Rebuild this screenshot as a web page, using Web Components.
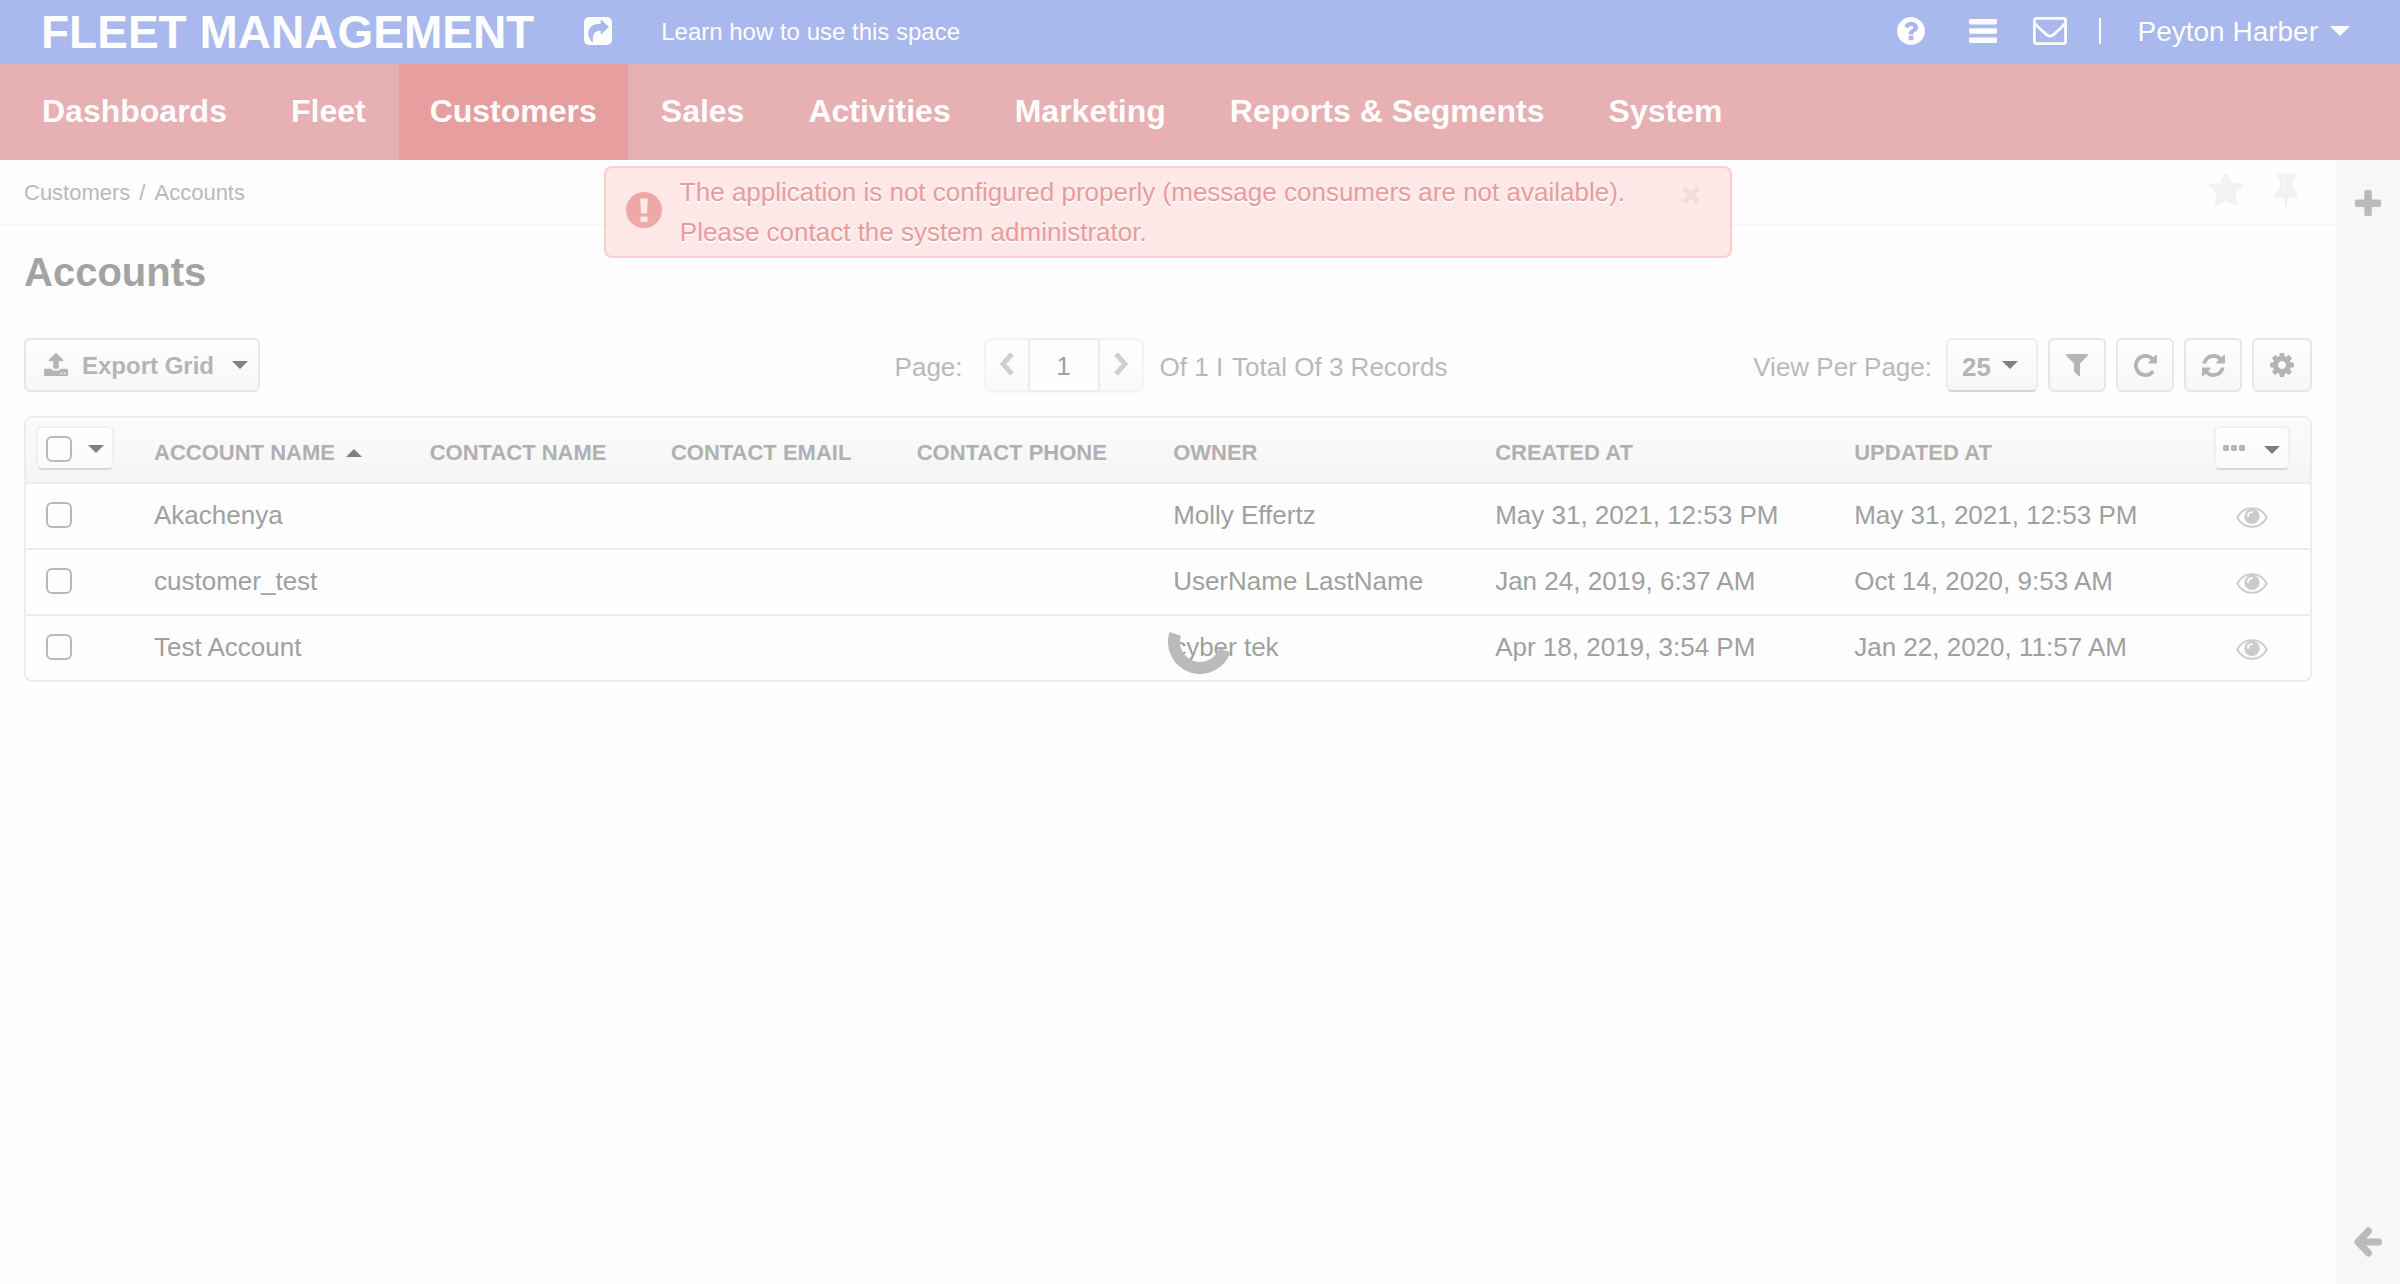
<!DOCTYPE html>
<html lang="en">
<head>
<meta charset="utf-8">
<title>Accounts - Customers - Fleet Management</title>
<style>
  html, body { height: 100%; }
  body {
    margin: 0;
    background: #fefefe;
    color: #a0a0a0;
    font-family: "Liberation Sans", Arial, Helvetica, sans-serif;
    font-size: 26px;
  }
</style>
</head>
<body>
<fm-app></fm-app>

<script>
const ICONS = {
  share: ['0 0 28 28', '<rect width="28" height="28" rx="5"/><path d="M16.700 2.500L25 10L16.700 17.800V13.800C11.500 13.600 8.300 15.800 8.900 25.500C5.500 23 4.300 19.500 4.300 16C4.300 10 9 6.700 16.700 6.700Z" fill="#a9b8ed"/>'],
  question: ['128 128 1536 1536', '<path d="M1024 1376v-192q0-14-9-23t-23-9h-192q-14 0-23 9t-9 23v192q0 14 9 23t23 9h192q14 0 23-9t9-23zm256-672q0-88-55.5-163t-138.5-116-170-41q-243 0-371 213-15 24 8 42l132 100q7 6 19 6 16 0 25-12 53-68 86-92 34-24 86-24 48 0 85.5 26t37.5 59q0 38-20 61t-68 45q-63 28-115.5 86.5t-52.5 125.5v36q0 14 9 23t23 9h192q14 0 23-9t9-23q0-19 21.5-49.5t54.5-49.5q32-18 49-28.5t46-35 44.5-48 28-60.5 12.5-81zm384 192q0 209-103 385.5t-279.5 279.5-385.5 103-385.5-103-279.5-279.5-103-385.5 103-385.5 279.5-279.5 385.5-103 385.5 103 279.5 279.5 103 385.5z"/>'],
  bars: ['0 0 28 24', '<rect width="28" height="5.4" rx="1.4"/><rect y="9.3" width="28" height="5.4" rx="1.4"/><rect y="18.6" width="28" height="5.4" rx="1.4"/>'],
  envelope: ['0 0 34 28', '<rect x="1.4" y="1.4" width="31.2" height="25.2" rx="2" fill="none" stroke="currentColor" stroke-width="2.8"/><path d="M2 6.500C6 11.500 10 14.500 13.500 17.600Q17 20.400 20.500 17.600C24 14.500 28 11.500 32 6.500" fill="none" stroke="currentColor" stroke-width="2.800"/>'],
  star: ['64 128 1664 1600', '<path d="M1728 647q0 22-26 48l-363 354 86 500q1 7 1 20 0 21-10.5 35.5t-30.5 14.5q-19 0-40-12l-449-236-449 236q-22 12-40 12-21 0-31.5-14.500t-10.500-35.500q0-6 2-20l86-500-364-354q-25-27-25-48 0-37 56-46l502-73 225-455q19-41 49-41t49 41l225 455 502 73q56 9 56 46z"/>'],
  pin: ['320 128 1152 1664', '<path d="M800 864v-448q0-14-9-23t-23-9-23 9-9 23v448q0 14 9 23t23 9 23-9 9-23zm672 352q0 26-19 45t-45 19h-429l-51 483q-2 12-10.5 20.500t-20.500 8.500h-1q-27 0-32-27l-76-485h-404q-26 0-45-19t-19-45q0-123 78.500-221.500t177.500-98.500v-512q-52 0-90-38t-38-90 38-90 90-38h640q52 0 90 38t38 90-38 90-90 38v512q99 0 177.500 98.500t78.500 221.500z"/>'],
  plus: ['0 0 26 26', '<rect y="9.500" width="26" height="7.500" rx="1.800"/><rect x="9.300" width="7.500" height="26" rx="1.800"/>'],
  arrowLeft: ['0 0 28 30', '<path d="M14.500 4L4 15L14.500 26M5 15H24.500" fill="none" stroke="currentColor" stroke-width="7" stroke-linecap="round" stroke-linejoin="round"/>'],
  alert: ['0 0 36 36', '<circle cx="18" cy="18" r="18"/><path d="M14.200 6.500h7.600l-.8 15h-6zM14.500 24.500h7v5.500h-7z" fill="#fee8e8"/>'],
  upload: ['64 64 1664 1664', '<path d="M1344 1472q0-26-19-45t-45-19-45 19-19 45 19 45 45 19 45-19 19-45zm256 0q0-26-19-45t-45-19-45 19-19 45 19 45 45 19 45-19 19-45zm128-224v320q0 40-28 68t-68 28h-1472q-40 0-68-28t-28-68v-320q0-40 28-68t68-28h427q21 56 70.500 92t110.500 36h256q61 0 110.500-36t70.500-92h427q40 0 68 28t28 68zm-325-648q-17 40-59 40h-256v448q0 26-19 45t-45 19h-256q-26 0-45-19t-19-45v-448h-256q-42 0-59-40-17-39 14-69l448-448q18-19 45-19t45 19l448 448q31 30 14 69z"/>'],
  filter: ['192 256 1408 1408', '<path d="M1595 295q17 41-14 70l-493 493v742q0 42-39 59-13 5-25 5-27 0-45-19l-256-256q-19-19-19-45v-486l-493-493q-31-29-14-70 17-39 59-39h1280q42 0 59 39z"/>'],
  repeat: ['128 128 1536 1536', '<path d="M1664 256v448q0 26-19 45t-45 19h-448q-42 0-59-40-17-39 14-69l138-138q-148-137-349-137-104 0-198.500 40.500t-163.500 109.500-109.500 163.500-40.500 198.500 40.500 198.500 109.500 163.500 163.500 109.500 198.500 40.500q119 0 225-52t179-147q7-10 23-12 15 0 25 9l137 138q9 8 9.500 20.500t-7.500 22.500q-109 132-264 204.500t-327 72.500q-156 0-298-61t-245-164-164-245-61-298 61-298 164-245 245-164 298-61q147 0 284.500 55.500t244.500 156.500l130-129q29-31 70-14 39 17 39 59z"/>'],
  refresh: ['128 128 1536 1536', '<path d="M1639 1056q0 5-1 7-64 268-268 434.500t-478 166.500q-146 0-282.500-55t-243.500-157l-129 129q-19 19-45 19t-45-19-19-45v-448q0-26 19-45t45-19h448q26 0 45 19t19 45-19 45l-137 137q71 66 161 102t187 36q134 0 250-65t186-179q11-17 53-117 8-23 30-23h192q13 0 22.500 9.500t9.500 22.500zm25-800v448q0 26-19 45t-45 19h-448q-26 0-45-19t-19-45 19-45l138-138q-148-137-349-137-134 0-250 65t-186 179q-11 17-53 117-8 23-30 23h-199q-13 0-22.500-9.500t-9.500-22.500v-7q65-268 270-434.500t480-166.500q146 0 284 55.500t245 156.500l130-129q19-19 45-19t45 19 19 45z"/>'],
  cog: ['128 128 1536 1536', '<path d="M1152 896q0-106-75-181t-181-75-181 75-75 181 75 181 181 75 181-75 75-181zm512-109v222q0 12-8 23t-20 13l-185 28q-19 54-39 91 35 50 107 138 10 12 10 25t-9 23q-27 37-99 108t-94 71q-12 0-26-9l-138-108q-44 23-91 38-16 136-29 186-7 28-36 28h-222q-14 0-24.500-8.500t-11.500-21.500l-28-184q-49-16-90-37l-141 107q-10 9-25 9-14 0-25-11-126-114-165-168-7-10-7-23 0-12 8-23 15-21 51-66.500t54-70.500q-27-50-41-99l-183-27q-13-2-21-12.500t-8-23.500v-222q0-12 8-23t19-13l186-28q14-46 39-92-40-57-107-138-10-12-10-24 0-10 9-23 26-36 98.500-107.500t94.500-71.500q13 0 26 10l138 107q44-23 91-38 16-136 29-186 7-28 36-28h222q14 0 24.500 8.500t11.500 21.500l28 184q49 16 90 37l142-107q9-9 24-9 13 0 25 10 129 119 165 170 7 8 7 22 0 12-8 23-15 21-51 66.500t-54 70.500q26 50 41 98l183 28q13 2 21 12.500t8 23.500z"/>'],
  eye: ['0 0 32 21', '<path d="M1.200 10.500C4.500 4.500 10 1.100 16 1.100S27.500 4.500 30.800 10.500C27.500 16.500 22 19.900 16 19.900S4.500 16.500 1.200 10.500Z" fill="none" stroke="currentColor" stroke-width="1.900"/><circle cx="16" cy="9.400" r="7.600"/><path d="M12 9.200Q12 5.200 16 5.200" fill="none" stroke="#fefefe" stroke-width="1.800" stroke-linecap="round"/>'],
  chevronLeft: ['0 0 16 26', '<path d="M13 3L4 13L13 23" fill="none" stroke="currentColor" stroke-width="5"/>'],
  chevronRight: ['0 0 16 26', '<path d="M3 3L12 13L3 23" fill="none" stroke="currentColor" stroke-width="5"/>'],
  close: ['0 0 18 18', '<path d="M2 2L16 16M16 2L2 16" fill="none" stroke="currentColor" stroke-width="4.600"/>'],
  dots: ['0 0 22 6', '<rect width="6" height="6" rx="1.400"/><rect x="8" width="6" height="6" rx="1.400"/><rect x="16" width="6" height="6" rx="1.400"/>'],
};

const RESET = `
  *, *::before, *::after { box-sizing: border-box; }
  a { color: inherit; text-decoration: none; }
  button, input, select { font: inherit; color: inherit; margin: 0; }
  button { background: none; border: 0; padding: 0; cursor: pointer; }
`;

const BUTTON = `
  .btn {
    display: flex; align-items: center; justify-content: center;
    height: 54px;
    border: 2px solid #e6e6e6; border-radius: 6px;
    background: linear-gradient(#fefefe, #f7f7f7);
    color: #b4b4b4;
  }
`;

const CHECKBOX = `
  input[type="checkbox"] {
    appearance: none; display: block;
    width: 26px; height: 26px;
    border: 2px solid #b9b9b9; border-radius: 6px;
    background: #fefefe;
  }
`;

class Base extends HTMLElement {
  constructor() {
    super();
    this.attachShadow({ mode: 'open' });
  }
  connectedCallback() {
    this.shadowRoot.innerHTML = `<style>${RESET}${this.styles()}</style>${this.markup()}`;
  }
}

customElements.define('fm-icon', class extends Base {
  styles() {
    return `:host { display: block; flex: none; width: ${this.getAttribute('width')}px; height: ${this.getAttribute('height')}px; }
      svg { display: block; width: 100%; height: 100%; fill: currentColor; }`;
  }
  markup() {
    const [box, body] = ICONS[this.getAttribute('name')];
    return `<svg viewBox="${box}" aria-hidden="true">${body}</svg>`;
  }
});

customElements.define('fm-caret', class extends Base {
  styles() {
    return `:host { display: block; flex: none; width: 0; height: 0;
        border: 8px solid transparent; border-bottom: 0; border-top-color: var(--caret, #808080); }
      :host([up]) { border: 8px solid transparent; border-top: 0; border-bottom-color: #808080; }
      :host([large]) { border-width: 10px 10px 0; }`;
  }
  markup() { return ''; }
});

customElements.define('fm-topbar', class extends Base {
  styles() {
    return `
      :host { display: flex; align-items: center; height: 64px; padding: 0 50px 0 41px;
        background: #a9b8ed; color: #fefefe; --caret: #fefefe; }
      .brand { font-size: 46px; font-weight: bold; line-height: 62px; }
      .share { margin-left: 50px; padding-bottom: 2px; }
      .learn { margin-left: 49px; font-size: 24px; }
      .tools { display: flex; align-items: center; margin-left: auto; padding-bottom: 2px; }
      .bars { margin-left: 44px; }
      .mail { margin-left: 36px; }
      .user { display: flex; align-items: center; gap: 12px; margin-left: 32px; font-size: 28px; line-height: 28px; }
      .user span { padding-top: 2px; }
      .user::before { content: ""; width: 2px; height: 26px; margin-right: 24px; background: #fefefe; }
    `;
  }
  markup() {
    return `
      <a class="brand" href="#">FLEET MANAGEMENT</a>
      <a class="share" href="#" aria-label="Share"><fm-icon name="share" width="28" height="28"></fm-icon></a>
      <a class="learn" href="#">Learn how to use this space</a>
      <div class="tools">
        <button aria-label="Help"><fm-icon name="question" width="28" height="28"></fm-icon></button>
        <button class="bars" aria-label="Menu"><fm-icon name="bars" width="28" height="24"></fm-icon></button>
        <button class="mail" aria-label="Mail"><fm-icon name="envelope" width="34" height="28"></fm-icon></button>
        <button class="user"><span>Peyton Harber</span><fm-caret large></fm-caret></button>
      </div>`;
  }
});

customElements.define('fm-nav', class extends Base {
  styles() {
    return `
      :host { display: block; background: #e7b0b2; color: #fefefe; }
      nav { display: flex; gap: 2px; padding-left: 11px; }
      a { padding: 0 31px 2px; font-size: 32px; font-weight: bold; line-height: 94px; }
      a[aria-current] { background: #e69e9e; }
    `;
  }
  markup() {
    const items = ['Dashboards', 'Fleet', 'Customers', 'Sales', 'Activities', 'Marketing', 'Reports &amp; Segments', 'System'];
    return `<nav>${items.map(t => `<a href="#"${t === 'Customers' ? ' aria-current="page"' : ''}>${t}</a>`).join('')}</nav>`;
  }
});

customElements.define('fm-alert', class extends Base {
  styles() {
    return `
      :host { display: flex; align-items: flex-start; padding: 4px 30px 4px 20px;
        border: 2px solid #f9cfcf; border-radius: 8px; background: #fee8e8; color: #e89c9c;
        box-sizing: border-box; line-height: 40px; text-shadow: 0 2px 0 #fefefe; }
      .mark { margin-top: 20px; color: #eea8a8; }
      p { flex: 1; margin: 0 0 0 18px; }
      button { margin-top: 14px; color: #f5dadb; }
    `;
  }
  markup() {
    return `
      <fm-icon class="mark" name="alert" width="36" height="36"></fm-icon>
      <p role="alert"><slot></slot></p>
      <button aria-label="Close"><fm-icon name="close" width="18" height="18"></fm-icon></button>`;
  }
});

customElements.define('fm-breadcrumb', class extends Base {
  styles() {
    return `
      :host { display: flex; align-items: center; justify-content: space-between; height: 66px;
        padding: 0 38px 0 24px; border-bottom: 2px solid #f8f8f8; box-sizing: border-box;
        color: #b9b9b9; font-size: 22px; }
      nav { display: flex; gap: 9px; padding-top: 2px; }
      .marks { display: flex; align-items: center; gap: 30px; padding-bottom: 2px; color: #f2f2f2; }
    `;
  }
  markup() {
    return `
      <nav aria-label="Breadcrumb"><a href="#">Customers</a><span>/</span><a href="#">Accounts</a></nav>
      <div class="marks">
        <button aria-label="Favourite"><fm-icon name="star" width="36" height="34"></fm-icon></button>
        <button aria-label="Pin"><fm-icon name="pin" width="24" height="36"></fm-icon></button>
      </div>`;
  }
});

customElements.define('fm-pager', class extends Base {
  styles() {
    return `
      :host { display: flex; align-items: center; color: #b9b9b9; }
      label, .count { padding-top: 4px; }
      .count { display: flex; gap: 9px; }
      .group { display: flex; height: 54px; margin: 0 16px 0 21px; border-radius: 8px; box-shadow: 0 2px 4px #f8f8f8; }
      button { display: flex; align-items: center; justify-content: center; width: 44px; padding-bottom: 2px;
        border: 2px solid #f3f3f3; background: linear-gradient(#fefefe, #fafafa); color: #cfcfcf; }
      .prev { border-right: 0; border-radius: 8px 0 0 8px; }
      .next { border-left: 0; border-radius: 0 8px 8px 0; }
      input { width: 72px; padding: 2px 0 0; border: 2px solid #ececec; border-radius: 0; background: #fefefe;
        color: #a0a0a0; text-align: center; outline: 0; box-shadow: inset 0 2px 2px #f8f8f8; }
    `;
  }
  markup() {
    return `
      <label for="page">Page:</label>
      <div class="group">
        <button class="prev" aria-label="Previous page"><fm-icon name="chevronLeft" width="16" height="26"></fm-icon></button>
        <input id="page" type="text" value="1">
        <button class="next" aria-label="Next page"><fm-icon name="chevronRight" width="16" height="26"></fm-icon></button>
      </div>
      <div class="count"><span>Of 1 I</span><span>Total Of 3 Records</span></div>`;
  }
});

customElements.define('fm-toolbar', class extends Base {
  styles() {
    return `${BUTTON}
      :host { display: grid; grid-template-columns: 1fr auto 1fr; align-items: center; }
      fm-pager { padding-left: 6px; }
      .export { justify-self: start; padding: 0 10px 0 18px; font-size: 24px; font-weight: bold; }
      .export fm-icon { margin: 0 14px 0 0; }
      .export span { padding-top: 2px; }
      .export fm-caret { margin-left: 18px; }
      .right { display: flex; align-items: center; justify-self: end; gap: 10px; color: #b9b9b9; }
      label { margin-right: 4px; padding-top: 4px; }
      .size { display: grid; align-items: center; }
      .size > * { grid-area: 1 / 1; }
      .size fm-caret { justify-self: end; margin-right: 20px; pointer-events: none; }
      select.btn { appearance: none; width: 92px; padding: 4px 0 0 14px; font-weight: bold; outline: 0;
        border-color: #ececec #ececec #d6d6d6; }
      .right button { width: 58px; }
      .right button:last-child { width: 60px; }
    `;
  }
  markup() {
    return `
      <button class="btn export"><fm-icon name="upload" width="24" height="24"></fm-icon><span>Export Grid</span><fm-caret></fm-caret></button>
      <fm-pager></fm-pager>
      <div class="right">
        <label for="size">View Per Page:</label>
        <div class="size">
          <select id="size" class="btn"><option>25</option></select>
          <fm-caret></fm-caret>
        </div>
        <button class="btn" aria-label="Filters"><fm-icon name="filter" width="22" height="22"></fm-icon></button>
        <button class="btn" aria-label="Refresh"><fm-icon name="repeat" width="23" height="23"></fm-icon></button>
        <button class="btn" aria-label="Reset"><fm-icon name="refresh" width="23" height="23"></fm-icon></button>
        <button class="btn" aria-label="Grid settings"><fm-icon name="cog" width="24" height="24"></fm-icon></button>
      </div>`;
  }
});

customElements.define('fm-grid', class extends Base {
  styles() {
    return `${BUTTON}${CHECKBOX}
      :host { display: block; border: 2px solid #ececec; border-radius: 8px; overflow: hidden; }
      table { width: 100%; border-collapse: separate; border-spacing: 0; table-layout: fixed; }
      th, td { height: 66px; padding: 0 0 2px 20px; border-bottom: 2px solid #ececec; text-align: left; white-space: nowrap; }
      th { padding-bottom: 4px; background: linear-gradient(#fbfbfb, #f5f5f5); color: #b0b0b0; font-size: 22px; }
      th a { display: flex; align-items: center; gap: 11px; padding-top: 10px; }
      tbody tr:last-child td { height: 64px; border-bottom: 0; }
      th.pick { padding-left: 10px; }
      th.act, td.act { padding-left: 0; }
      .act > * { margin: 0 auto; }
      .btn { height: 44px; border-color: #f0f0f0 #f0f0f0 #d8d8d8; background: linear-gradient(#fefefe, #fafafa); }
      .pick .btn { width: 78px; gap: 16px; padding-top: 2px; }
      .act .btn { width: 76px; gap: 19px; }
      .act .btn fm-caret { margin-top: 4px; }
      .view { display: block; width: 32px; padding-top: 4px; color: #cbcbcb; }
    `;
  }
  markup() {
    const heads = ['Contact name', 'Contact email', 'Contact phone', 'Owner', 'Created at', 'Updated at'];
    const rows = [
      ['Akachenya', 'Molly Effertz', 'May 31, 2021, 12:53 PM', 'May 31, 2021, 12:53 PM'],
      ['customer_test', 'UserName LastName', 'Jan 24, 2019, 6:37 AM', 'Oct 14, 2020, 9:53 AM'],
      ['Test Account', 'cyber tek', 'Apr 18, 2019, 3:54 PM', 'Jan 22, 2020, 11:57 AM'],
    ];
    const widths = [4.73, 12.07, 10.56, 10.76, 11.23, 14.1, 15.72, 15.75, 5.08];
    return `
      <table>
        <colgroup>${widths.map(w => `<col style="width:${w}%">`).join('')}</colgroup>
        <thead><tr>
          <th class="pick"><div class="btn"><input type="checkbox" aria-label="Select all"><fm-caret></fm-caret></div></th>
          <th aria-sort="ascending"><a href="#">ACCOUNT NAME <fm-caret up></fm-caret></a></th>
          ${heads.map(h => `<th><a href="#">${h.toUpperCase()}</a></th>`).join('')}
          <th class="act"><button class="btn" aria-label="Actions"><fm-icon name="dots" width="22" height="6"></fm-icon><fm-caret></fm-caret></button></th>
        </tr></thead>
        <tbody>${rows.map(([name, owner, created, updated]) => `<tr>
          <td class="pick"><input type="checkbox" aria-label="Select ${name}"></td>
          <td>${name}</td><td></td><td></td><td></td>
          <td>${owner}</td><td>${created}</td><td>${updated}</td>
          <td class="act"><a class="view" href="#" aria-label="View ${name}"><fm-icon name="eye" width="32" height="21"></fm-icon></a></td>
        </tr>`).join('')}</tbody>
      </table>`;
  }
});

customElements.define('fm-sidebar', class extends Base {
  styles() {
    return `:host { display: flex; flex-direction: column; align-items: center; justify-content: space-between;
      width: 64px; padding: 30px 0 27px; background: #f7f7f7; color: #bababa; box-sizing: border-box; }`;
  }
  markup() {
    return `
      <button aria-label="Add widget"><fm-icon name="plus" width="26" height="26"></fm-icon></button>
      <button aria-label="Expand sidebar"><fm-icon name="arrowLeft" width="28" height="30"></fm-icon></button>`;
  }
});

customElements.define('fm-spinner', class extends Base {
  styles() {
    return `:host { display: block; position: fixed; inset: 0; margin: auto; width: 64px; height: 64px; pointer-events: none; }
      svg { display: block; }`;
  }
  markup() {
    return `<svg width="64" height="64" viewBox="0 0 64 64" role="img" aria-label="Loading">
      <path d="M6 32A26 26 0 0 0 58 32" transform="rotate(18 32 32)" fill="none" stroke="#bababa" stroke-width="12"/></svg>`;
  }
});

customElements.define('fm-app', class extends Base {
  styles() {
    return `
      :host { display: flex; flex-direction: column; min-height: 100vh; }
      .body { display: flex; flex: 1; }
      main { position: relative; flex: 1; min-width: 0; }
      fm-alert { position: absolute; top: 6px; left: 0; right: 0; width: 48.3%; margin: 0 auto; }
      h1 { margin: 0; padding: 0 24px; font-size: 40px; line-height: 48px; color: #a3a3a3; }
      .content { display: flex; flex-direction: column; padding-top: 22px; }
      fm-toolbar { margin: 42px 24px 24px; }
      fm-grid { margin: 0 24px; }
    `;
  }
  markup() {
    return `
      <fm-topbar></fm-topbar>
      <fm-nav></fm-nav>
      <div class="body">
        <main>
          <fm-breadcrumb></fm-breadcrumb>
          <fm-alert>The application is not configured properly (message consumers are not available).<br>Please contact the system administrator.</fm-alert>
          <div class="content">
            <h1>Accounts</h1>
            <fm-toolbar></fm-toolbar>
            <fm-grid></fm-grid>
          </div>
        </main>
        <fm-sidebar></fm-sidebar>
      </div>
      <fm-spinner></fm-spinner>`;
  }
});
</script>
</body>
</html>
